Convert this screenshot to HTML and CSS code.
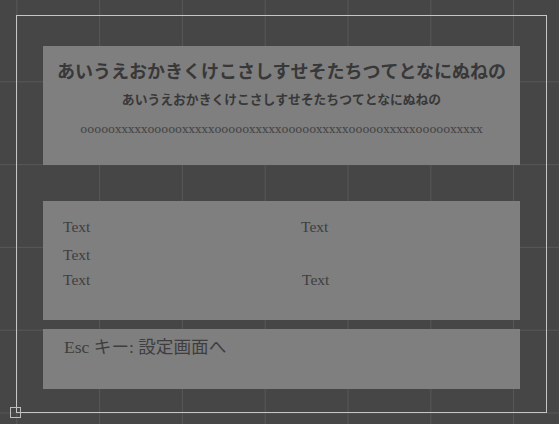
FILE: index.html
```html
<!DOCTYPE html>
<html lang="ja">
<head>
<meta charset="utf-8">
<title>Scene</title>
<link rel="stylesheet" href="styles.css">
</head>
<body>
<div class="scene">
  <div class="frame"></div>
  <div class="anchor"></div>
  <div class="stack">
    <section class="panel panel-title">
      <div class="kana-large">あいうえおかきくけこさしすせそたちつてとなにぬねの</div>
      <div class="kana-small">あいうえおかきくけこさしすせそたちつてとなにぬねの</div>
      <div class="ox">oooooxxxxxoooooxxxxxoooooxxxxxoooooxxxxxoooooxxxxxoooooxxxxx</div>
    </section>
    <section class="panel panel-texts">
      <div class="row row-1"><span class="cell">Text</span><span class="cell">Text</span></div>
      <div class="row row-2"><span class="cell">Text</span></div>
      <div class="row row-3"><span class="cell">Text</span><span class="cell cell-shift">Text</span></div>
    </section>
    <section class="panel panel-esc">
      <div class="esc">Esc キー: 設定画面へ</div>
    </section>
  </div>
</div>
</body>
</html>
```
FILE: styles.css
```css
html, body {
  margin: 0;
  padding: 0;
}
body {
  width: 559px;
  height: 424px;
  overflow: hidden;
  background-color: #464646;
  background-image:
    linear-gradient(to right, #575757 0, #575757 1px, transparent 1px),
    linear-gradient(to bottom, #575757 0, #575757 1px, transparent 1px);
  background-size: 82.8px 82.8px;
  background-position: 16.3px 81.3px;
}
.scene {
  position: relative;
  width: 559px;
  height: 424px;
}
.frame {
  position: absolute;
  left: 16px;
  top: 15px;
  width: 531px;
  height: 398px;
  border: 1px solid #c6c6c6;
  box-sizing: border-box;
}
.anchor {
  position: absolute;
  left: 10px;
  top: 407px;
  width: 11px;
  height: 11px;
  border: 1px solid #bdbdbd;
  box-sizing: border-box;
}
.stack {
  display: flex;
  flex-direction: column;
  padding: 46px 0 0 43px;
  width: 477px;
}
.panel {
  background: #7f7f7f;
  color: #383838;
  box-sizing: border-box;
}
.panel-title {
  height: 119px;
  display: flex;
  flex-direction: column;
  align-items: center;
  padding-top: 12px;
}
.kana-large {
  font-family: "Noto Sans CJK JP", sans-serif;
  font-weight: bold;
  font-size: 18px;
  line-height: 24px;
  white-space: nowrap;
}
.kana-small {
  font-family: "Noto Sans CJK JP", sans-serif;
  font-weight: bold;
  font-size: 12.8px;
  line-height: 18px;
  margin-top: 8px;
  white-space: nowrap;
}
.ox {
  font-family: "DejaVu Serif", serif;
  font-size: 11.5px;
  line-height: 14px;
  margin-top: 14px;
  color: #444;
  white-space: nowrap;
}
.panel-texts {
  margin-top: 36px;
  height: 119px;
  padding: 16px 0 0 20px;
  font-family: "Liberation Serif", serif;
  font-size: 15.5px;
  line-height: 20px;
  color: #3e3e3e;
}
.row {
  display: grid;
  grid-template-columns: 238px auto;
}
.row-1 { height: 28px; }
.row-2 { height: 24.5px; }
.cell-shift { margin-left: 1px; }
.panel-esc {
  margin-top: 9px;
  height: 60px;
  padding: 6px 0 0 21px;
}
.esc {
  font-family: "Liberation Serif", "Noto Sans CJK JP", serif;
  font-size: 17.6px;
  line-height: 24px;
  color: #3e3e3e;
}
```
